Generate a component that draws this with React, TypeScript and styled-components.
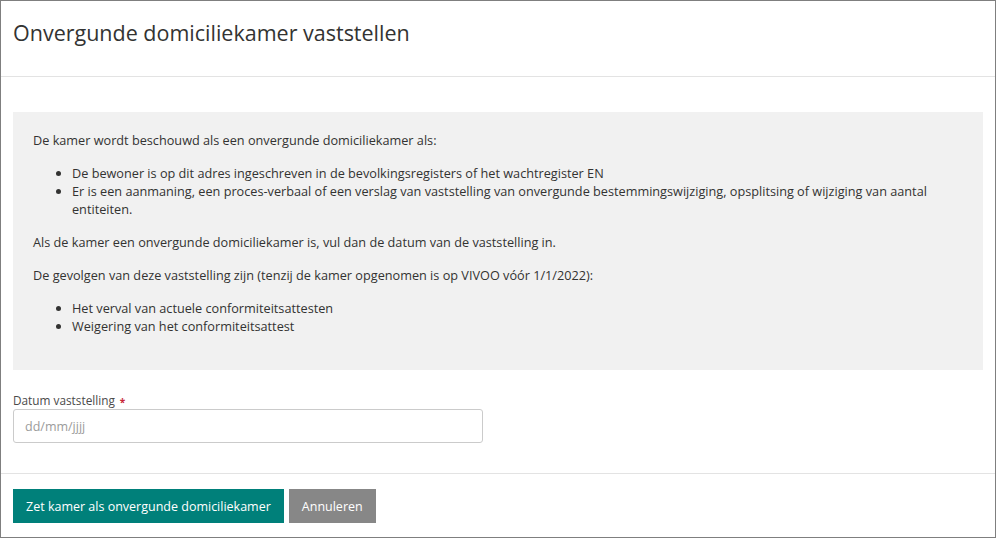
import React from "react";
import styled, { createGlobalStyle } from "styled-components";

const GlobalStyle = createGlobalStyle`
  html, body {
    margin: 0;
    padding: 0;
    background: #ffffff;
  }
  body {
    font-family: "Open Sans", "Noto Sans", sans-serif;
    color: #333332;
  }
  * { box-sizing: border-box; }
`;

const Modal = styled.div`
  width: 996px;
  height: 538px;
  border: 1px solid #7f7f7f;
  background: #ffffff;
  display: flex;
  flex-direction: column;
`;

const Header = styled.header`
  height: 76px;
  flex: none;
  padding: 19px 12px 0;
  border-bottom: 1px solid #e3e3e3;
`;

const Title = styled.h1`
  margin: 0;
  font-size: 21.5px;
  line-height: 26px;
  font-weight: 400;
  color: #333332;
`;

const Body = styled.div`
  padding: 35px 12px 0;
  display: flex;
  flex-direction: column;
`;

const InfoBox = styled.div`
  background: #f1f1f1;
  padding: 19px 20px 20px;
  font-size: 12.7px;
  line-height: 18px;
  color: #333332;
`;

const Paragraph = styled.p`
  margin: 0 0 15px;
`;

const List = styled.ul`
  margin: 0 0 15px;
  padding-left: 39px;
`;

const Field = styled.div`
  margin-top: 22px;
  display: flex;
  flex-direction: column;
`;

const Label = styled.label`
  font-size: 11.8px;
  line-height: 16px;
  color: #4a4a4a;
  margin-bottom: 1px;
  display: flex;
  align-items: center;
`;

const Required = styled.span`
  color: #c8273a;
  font-size: 10px;
  font-weight: 700;
  margin-left: 5px;
  line-height: 10px;
  padding-top: 3px;
`;

const DateInput = styled.input`
  width: 470px;
  height: 34px;
  border: 1px solid #cbcbcb;
  border-radius: 3px;
  padding: 0 11px;
  font-family: "Open Sans", "Noto Sans", sans-serif;
  font-size: 12.5px;
  color: #333332;
  background: #ffffff;
  outline: none;
  &::placeholder {
    color: #9b9b9b;
  }
`;

const Footer = styled.footer`
  margin-top: auto;
  border-top: 1px solid #e3e3e3;
  padding: 15px 12px 14px;
  display: flex;
  gap: 5px;
`;

const Button = styled.button<{ $variant: "primary" | "secondary" }>`
  height: 34px;
  padding: 0 13px;
  border: none;
  border-radius: 0;
  font-family: "Open Sans", "Noto Sans", sans-serif;
  font-size: 12.5px;
  color: #ffffff;
  background: ${(p) => (p.$variant === "primary" ? "#00807a" : "#878787")};
  cursor: pointer;
`;

export default function App() {
  return (
    <>
      <GlobalStyle />
      <Modal>
        <Header>
          <Title>Onvergunde domiciliekamer vaststellen</Title>
        </Header>
        <Body>
          <InfoBox>
            <Paragraph>De kamer wordt beschouwd als een onvergunde domiciliekamer als:</Paragraph>
            <List>
              <li>De bewoner is op dit adres ingeschreven in de bevolkingsregisters of het wachtregister EN</li>
              <li>
                Er is een aanmaning, een proces-verbaal of een verslag van vaststelling van onvergunde
                bestemmingswijziging, opsplitsing of wijziging van aantal entiteiten.
              </li>
            </List>
            <Paragraph>Als de kamer een onvergunde domiciliekamer is, vul dan de datum van de vaststelling in.</Paragraph>
            <Paragraph>
              De gevolgen van deze vaststelling zijn (tenzij de kamer opgenomen is op VIVOO vóór 1/1/2022):
            </Paragraph>
            <List>
              <li>Het verval van actuele conformiteitsattesten</li>
              <li>Weigering van het conformiteitsattest</li>
            </List>
          </InfoBox>
          <Field>
            <Label htmlFor="datum">
              Datum vaststelling<Required>*</Required>
            </Label>
            <DateInput id="datum" type="text" placeholder="dd/mm/jjjj" />
          </Field>
        </Body>
        <Footer>
          <Button $variant="primary">Zet kamer als onvergunde domiciliekamer</Button>
          <Button $variant="secondary">Annuleren</Button>
        </Footer>
      </Modal>
    </>
  );
}
